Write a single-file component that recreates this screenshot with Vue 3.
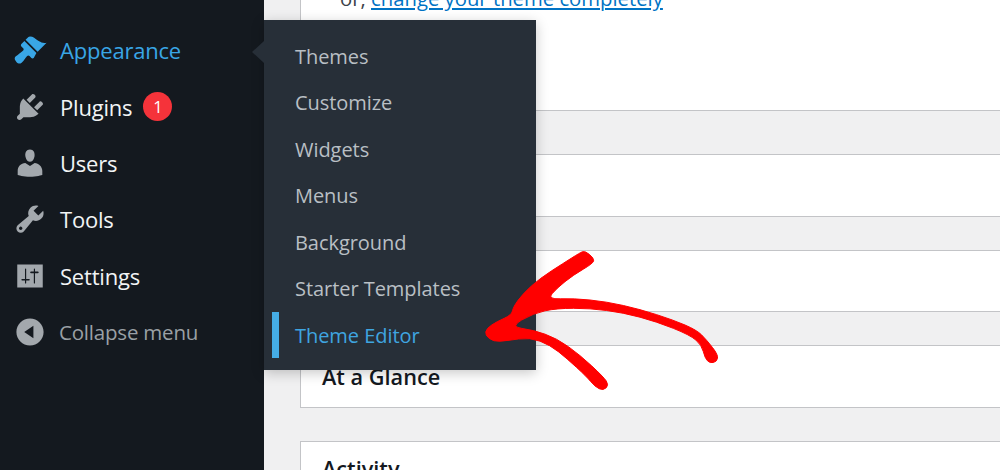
<script setup>
const menu = [
  { key: 'appearance', label: 'Appearance', active: true, d: 'M14.48 11.06L7.41 3.99l1.5-1.5c.5-.56 2.3-.47 3.51.32 1.21.8 1.43 1.28 2.91 2.1 1.18.64 2.45 1.26 4.45.85zm-.71.71L6.7 4.7 4.93 6.47c-.39.39-.39 1.02 0 1.41l1.06 1.06c.39.39.39 1.03 0 1.42-.6.6-1.43 1.11-2.21 1.69-.35.26-.7.53-1.01.84C1.43 13.71.96 14.28 1 15c.04.72.5 1.3 1 2s1.2 1 1.9 1c.72 0 1.3-.5 1.9-1.2.29-.32.56-.66.81-1.01.6-.78 1.11-1.61 1.71-2.21.39-.39 1.02-.39 1.41 0l1.06 1.06c.39.39 1.02.39 1.41 0z' },
  { key: 'plugins', label: 'Plugins', badge: '1', d: 'M13.11 4.36L9.87 7.6 8 5.73l3.24-3.24c.35-.34 1.05-.2 1.56.32.52.51.66 1.21.31 1.55zm-8 1.77l.91-1.12 9.01 9.01-1.19.84c-.71.71-2.63 1.16-3.82 1.16H6.14L4.9 17.26c-.59.59-1.54.59-2.12 0-.59-.58-.59-1.53 0-2.12l1.24-1.24v-3.88c0-1.13.4-3.19 1.09-3.89zm7.26 3.97l3.24-3.24c.34-.35 1.04-.21 1.55.31.52.51.66 1.21.31 1.55l-3.24 3.25z' },
  { key: 'users', label: 'Users', d: 'M10 9.25c-2.27 0-2.73-3.44-2.73-3.44C7 4.02 7.82 2 9.97 2c2.16 0 2.98 2.02 2.71 3.81 0 0-.41 3.44-2.68 3.44zm0 2.57L12.72 10c2.39 0 4.52 2.33 4.52 4.53v2.49s-3.65 1.13-7.24 1.13c-3.65 0-7.24-1.13-7.24-1.13v-2.49c0-2.25 1.94-4.48 4.47-4.48z' },
  { key: 'tools', label: 'Tools', d: 'M16.68 9.77c-1.34 1.34-3.3 1.67-4.95.99l-5.41 6.52c-.99.99-2.59.99-3.58 0s-.99-2.59 0-3.57l6.52-5.42c-.68-1.65-.35-3.61.99-4.95 1.28-1.28 3.12-1.62 4.72-1.06l-2.89 2.89 2.82 2.82 2.86-2.87c.53 1.58.18 3.39-1.08 4.65zM3.81 16.21c.4.39 1.04.39 1.43 0 .4-.4.4-1.04 0-1.43-.39-.4-1.03-.4-1.43 0-.39.39-.39 1.03 0 1.43z' },
  { key: 'settings', label: 'Settings', d: 'M2.5 3.2h15v13.6h-15zM7.4 5.6c-.2 0-.35.15-.35.35v5.75H5.4c-.3 0-.5.2-.5.5s.2.5.5.5h1.65v1.4c0 .2.15.35.35.35s.35-.15.35-.35v-1.4H9.4c.3 0 .5-.2.5-.5s-.2-.5-.5-.5H7.75V5.95c0-.2-.15-.35-.35-.35zM12.6 5.6c-.2 0-.35.15-.35.35v1.45H10.6c-.3 0-.5.2-.5.5s.2.5.5.5h1.65v5.65c0 .2.15.35.35.35s.35-.15.35-.35V8.4h1.65c.3 0 .5-.2.5-.5s-.2-.5-.5-.5h-1.65V5.95c0-.2-.15-.35-.35-.35z' },
  { key: 'collapse', label: 'Collapse menu', muted: true, d: 'M18 10c0-4.42-3.58-8-8-8s-8 3.58-8 8 3.58 8 8 8 8-3.58 8-8zM12 6.3v7.4L6.6 10z' },
]
const sub = ['Themes', 'Customize', 'Widgets', 'Menus', 'Background', 'Starter Templates', 'Theme Editor']

// Hand-traced outline of the red arrow, smoothed through edge midpoints.
const outline = [
  [585, 250.7], [594, 258.3], [593.3, 263.3], [573.3, 275], [556.7, 288.3], [547.3, 299.3],
  [573.3, 298.3], [606.7, 301.7], [640, 309.3], [673.3, 320], [696.7, 330], [706.7, 340],
  [718.3, 355], [716.7, 361.7], [710, 363.3], [705, 358.3], [701.7, 345], [690, 335],
  [656.7, 321.7], [623.3, 312.7], [590, 308.3], [556.7, 308.3], [533.3, 313.3], [510, 326.7],
  [533.3, 330], [556.7, 338.3], [580, 355], [603.3, 376.7], [609, 385], [603.3, 390.7],
  [595, 386.7], [586.7, 376.7], [566.7, 358.3], [550, 345], [530, 337.3], [506.7, 340.7],
  [493.3, 341.7], [485, 335], [486.7, 328.3], [496.7, 321.7], [511.7, 315], [513.3, 306.7],
  [523.3, 293.3], [540, 278.3], [563.3, 263.3], [580, 252.7],
]
const mid = (a, b) => [(a[0] + b[0]) / 2, (a[1] + b[1]) / 2]
const arrowPath = (() => {
  const n = outline.length
  const start = mid(outline[n - 1], outline[0])
  let d = `M${start[0]} ${start[1]}`
  outline.forEach((p, i) => {
    const m = mid(p, outline[(i + 1) % n])
    d += `Q${p[0]} ${p[1]} ${m[0]} ${m[1]}`
  })
  return d + 'Z'
})()
</script>

<template>
  <div class="page">
    <aside class="sidebar">
      <div
        v-for="m in menu"
        :key="m.key"
        class="row"
        :class="{ active: m.active, muted: m.muted }"
      >
        <svg class="icon" :class="m.key" viewBox="0 0 20 20"><path :d="m.d" fill-rule="evenodd" /></svg>
        <span class="label">{{ m.label }}</span>
        <span v-if="m.badge" class="badge">{{ m.badge }}</span>
      </div>
    </aside>

    <main class="main">
      <section class="card first">
        <p class="line">or, <a class="link">change your theme completely</a></p>
      </section>
      <section class="card second"></section>
      <section class="card third"></section>
      <section class="card glance"><h2>At a Glance</h2></section>
      <section class="card activity"><h2>Activity</h2></section>
    </main>

    <nav class="submenu">
      <span class="caret"></span>
      <div v-for="s in sub" :key="s" class="sub-item" :class="{ current: s === 'Theme Editor' }">{{ s }}</div>
    </nav>

    <svg class="arrow" viewBox="0 0 1000 470" width="1000" height="470">
      <path :d="arrowPath" fill="#ff0000" stroke="#ff0000" stroke-width="1" stroke-linejoin="round" />
    </svg>
  </div>
</template>

<style>
html, body { margin: 0; padding: 0; background: #f0f0f1; }
</style>

<style scoped>
.page {
  position: relative;
  display: flex;
  width: 1000px;
  height: 470px;
  overflow: hidden;
  background: #f0f0f1;
  font-family: "Open Sans", "Noto Sans", sans-serif;
}
.sidebar {
  display: flex;
  flex-direction: column;
  flex: 0 0 264px;
  box-sizing: border-box;
  padding-top: 22px;
  background: #14191f;
}
.row {
  display: flex;
  align-items: center;
  height: 56.4px;
  padding-left: 13px;
  color: #f2f4f5;
  font-size: 22px;
  letter-spacing: -0.2px;
}
.row.active { color: #39a6e6; }
.row.muted { color: #9aa0a5; font-size: 20.5px; }
.icon {
  flex: 0 0 34px;
  width: 34px;
  height: 34px;
  margin-right: 13px;
  fill: #a3a8ad;
}
.row.active .icon { fill: #39a6e6; }
.row.muted .label { margin-left: -1px; }
.badge {
  display: flex;
  align-items: center;
  justify-content: center;
  width: 29px;
  height: 29px;
  margin-left: 11px;
  border-radius: 50%;
  background: #f5333a;
  color: #fff;
  font-size: 16.5px;
  letter-spacing: 0;
}
.main {
  flex: 1;
  display: flex;
  flex-direction: column;
  min-width: 0;
  padding-left: 36px;
}
.card {
  flex: none;
  box-sizing: border-box;
  margin-right: -40px;
  background: #fff;
  border: 1px solid #c3c4c7;
}
.first {
  height: 131px;
  margin-top: -20px;
  margin-bottom: 43px;
  padding: 3px 0 0 39px;
}
.second { height: 63px; margin-bottom: 33px; }
.third { height: 62px; margin-bottom: 33px; }
.glance { height: 63px; margin-bottom: 33px; padding: 16px 21px; }
.activity { height: 80px; padding: 12px 21px; }
.line {
  margin: 0;
  color: #3c434a;
  font-size: 20.3px;
  line-height: 28px;
}
.link {
  color: #0073c4;
  text-decoration: underline;
}
h2 {
  margin: 0;
  color: #14191f;
  font-size: 21.7px;
  font-weight: 600;
  line-height: 30px;
}
.submenu {
  position: absolute;
  left: 264px;
  top: 20px;
  display: flex;
  flex-direction: column;
  width: 272px;
  height: 350px;
  box-sizing: border-box;
  padding-top: 13px;
  background: #272f38;
  box-shadow: 0 3px 12px rgba(0, 0, 0, 0.22);
}
.caret {
  position: absolute;
  left: -12px;
  top: 21px;
  width: 0;
  height: 0;
  border-style: solid;
  border-width: 11px 12px 11px 0;
  border-color: transparent #272f38 transparent transparent;
}
.sub-item {
  position: relative;
  display: flex;
  align-items: center;
  height: 46.5px;
  padding-left: 31px;
  color: #b9bfc4;
  font-size: 20px;
  letter-spacing: -0.05px;
}
.sub-item.current { color: #3fa5e0; }
.sub-item.current::before {
  content: "";
  position: absolute;
  left: 8px;
  top: 0;
  width: 7px;
  height: 46px;
  background: #45ade6;
}
.arrow {
  position: absolute;
  left: 0;
  top: 0;
  pointer-events: none;
}
</style>
